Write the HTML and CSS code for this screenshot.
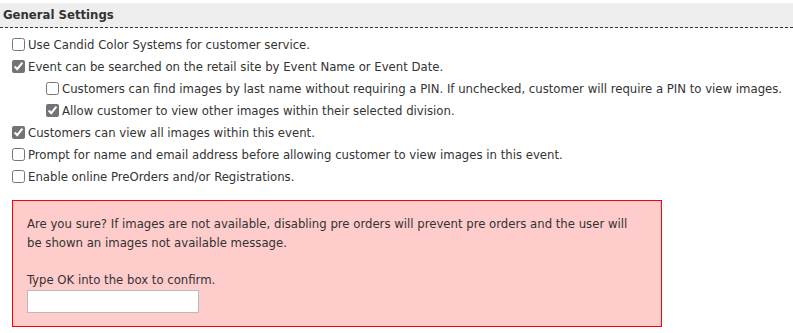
FILE: index.html
```html
<!DOCTYPE html>
<html lang="en">

<head>
    <meta charset="UTF-8">
    <title>General Settings</title>
    <link rel="stylesheet" href="styles.css">
</head>

<body>
    <div class="section-title">General Settings</div>

    <div class="options">
        <label class="option">
            <input type="checkbox">Use Candid Color Systems for customer service.
        </label>
        <label class="option">
            <input type="checkbox" checked>Event can be searched on the retail site by Event Name or Event Date.
        </label>
        <label class="option sub">
            <input type="checkbox">Customers can find images by last name without requiring a PIN. If unchecked, customer will require a PIN to view images.
        </label>
        <label class="option sub">
            <input type="checkbox" checked>Allow customer to view other images within their selected division.
        </label>
        <label class="option">
            <input type="checkbox" checked>Customers can view all images within this event.
        </label>
        <label class="option">
            <input type="checkbox">Prompt for name and email address before allowing customer to view images in this event.
        </label>
        <label class="option">
            <input type="checkbox">Enable online PreOrders and/or Registrations.
        </label>
    </div>

    <div class="confirm-box">
        <p>Are you sure? If images are not available, disabling pre orders will prevent pre orders and the user will be shown an images not available message.</p>
        <p>Type OK into the box to confirm.</p>
        <input type="text" class="confirm-input">
    </div>
</body>

</html>
```
FILE: styles.css
```css
body {
    font-family: "DejaVu Sans Condensed", "DejaVu Sans", sans-serif;
    font-size: 13px;
    color: #333;
    margin: 0;
    padding-top: 3px;
}

.section-title {
    background-color: #eee;
    font-weight: bold;
    padding: 4px 3px;
    line-height: 16px;
    border-bottom: 1px dashed #333;
}

.options {
    margin-top: 5px;
    padding-left: 8px;
}

.option {
    display: flex;
    align-items: center;
    height: 22px;
    white-space: nowrap;
}

.option.sub {
    padding-left: 34px;
}

.option input {
    width: 13px;
    height: 13px;
    margin: 0 3px 0 4px;
    accent-color: #737373;
}

.confirm-box {
    width: 610px;
    margin: 13px 0 0 12px;
    padding: 14px 24px 13px 14px;
    background-color: #fcc;
    border: 1px solid #f00;
    line-height: 1.42857;
}

.confirm-box p {
    margin: 0 0 18.57px;
}

.confirm-box p:last-of-type {
    margin-bottom: 0;
}

.confirm-input {
    display: block;
    box-sizing: border-box;
    width: 172px;
    height: 23px;
    margin: 1px 0 0;
    border: 1px solid #bbb;
    background-color: #fff;
    font: inherit;
}
```
